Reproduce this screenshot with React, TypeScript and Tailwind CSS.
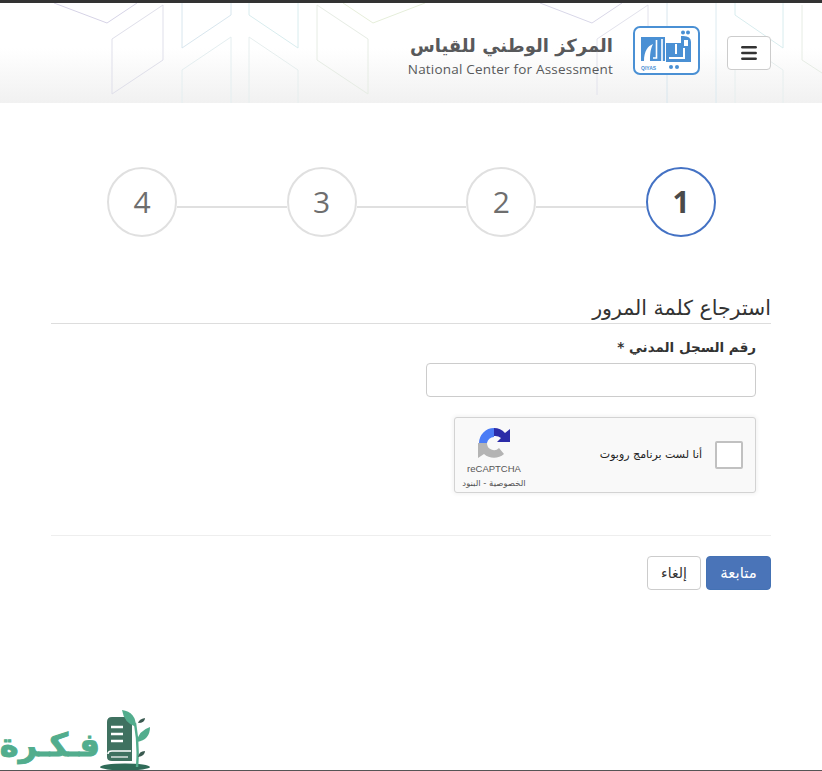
import { Menu } from "lucide-react";

const AR = "font-['DejaVu_Sans',sans-serif]";

const steps = ["2", "3", "4"];

/* faint hexagon lines behind the header */
const headerLines = [
  { p: "54,3 107,23 137,3", c: "#d6d3e6" },
  { p: "112,39 163,5 163,60 112,94 112,39", c: "#dfdfea" },
  { p: "182,3 182,48 231,15 231,3", c: "#d8e6ee" },
  { p: "182,103 182,70 231,37 231,103", c: "#e4eef0" },
  { p: "249,3 249,15 298,48 298,3", c: "#d8ecee" },
  { p: "249,103 249,37 298,70 298,103", c: "#e6eeee" },
  { p: "317,5 317,60 368,94 368,39 317,5", c: "#e6ece4" },
  { p: "343,3 373,23 425,3", c: "#e6eeda" },
  { p: "540,3 592,23 622,3", c: "#d9d7e8" },
  { p: "597,95 597,39 648,5 648,60", c: "#e2e2ec" },
  { p: "667,3 667,103", c: "#d8e6ee" },
  { p: "716,3 716,103", c: "#dceaf0" },
  { p: "735,3 735,15 783,48 783,3", c: "#d8ecee" },
  { p: "735,103 735,37 783,70 783,103", c: "#e6eeee" },
  { p: "802,5 802,60 822,73", c: "#e6ece4" },
];

function HeaderPattern() {
  return (
    <svg className="absolute inset-0 h-full w-full" viewBox="0 0 822 100" preserveAspectRatio="none">
      <g transform="translate(0,-3)">
        {headerLines.map((l) => (
          <polyline key={l.p} points={l.p} fill="none" stroke={l.c} strokeWidth="1" />
        ))}
      </g>
    </svg>
  );
}

function QiyasLogo() {
  return (
    <svg width="67" height="49" viewBox="0 0 67 49">
      <rect x="1" y="1" width="65" height="47" rx="6" fill="#fff" stroke="#4a90d4" strokeWidth="2" />
      {/* left block */}
      <path d="M8 11H32V35H8Z" fill="#4a90d4" />
      <path d="M11 35C11 25 15 20 20 18C17 24 17 30 17 35Z" fill="#fff" />
      <path d="M23.5 14V32H20M29 13V35" fill="none" stroke="#fff" strokeWidth="1.6" />
      {/* right block */}
      <path d="M33 17H48V10Q58 9 58 16V36H33Z" fill="#4a90d4" />
      <path d="M51 14H55V20H51Z" fill="#fff" />
      <path d="M43 18V28M36 32H51V22" fill="none" stroke="#fff" strokeWidth="2" />
      <circle cx="50" cy="6.5" r="2" fill="#4a90d4" />
      <circle cx="55" cy="6.5" r="2" fill="#4a90d4" />
      <circle cx="38" cy="41" r="2" fill="#4a90d4" />
      <circle cx="44" cy="41" r="2" fill="#4a90d4" />
      <text x="8" y="44" direction="ltr" fontSize="5" fontWeight="700" fill="#4a90d4" fontFamily="Liberation Sans" className="[direction:ltr]">QIYAS</text>
    </svg>
  );
}

function RecaptchaIcon() {
  return (
    <svg width="32" height="32" viewBox="0 0 32 32">
      <path d="M1 16A15 15 0 0 1 16 1V10A7 7 0 0 0 9 16Z" fill="#4a7cf6" />
      <path d="M16 1A15 15 0 0 1 27 6L32 2V15H19L23 11A9 9 0 0 0 16 9Z" fill="#2c2ca8" />
      <path d="M1 16H9A7 7 0 0 0 21 21L26 27A15 15 0 0 1 6 27L0 31V16Z" fill="#b4b4b4" />
    </svg>
  );
}

function Watermark() {
  return (
    <div dir="ltr" className="absolute bottom-0 left-0 flex h-[60px] items-end">
      <span dir="rtl" className={`${AR} mb-[2px] w-[100px] text-[32px] leading-[46px] font-bold whitespace-nowrap text-[#52ad8d] [-webkit-text-stroke:1px_#52ad8d]`}>فـكـرة</span>
      <svg width="52" height="60" viewBox="0 0 52 60">
        <ellipse cx="25" cy="57" rx="25" ry="3.5" fill="#2f6b58" />
        <path d="M7 12Q7 7 12 7H32V51H12Q7 51 7 47Z" fill="#3f7160" />
        <path d="M11 17H23M11 24H23M11 31H23" stroke="#fff" strokeWidth="2.4" />
        <path d="M8 44Q8 41 12 41H31" fill="none" stroke="#fff" strokeWidth="1.6" />
        <path d="M11 47H28" stroke="#fff" strokeWidth="1.2" />
        <path d="M37 57Q39 36 35 13" fill="none" stroke="#52ad8d" strokeWidth="2.4" />
        <path d="M36 17Q24 13 22 0Q36 2 36 17Z" fill="#52ad8d" />
        <path d="M37 32Q38 21 50 17Q50 30 37 32Z" fill="#52ad8d" />
        <path d="M38 13Q39 9 45 8Q45 13 38 13ZM38 47Q39 41 45 41Q45 46 38 47Z" fill="#3a5a50" />
      </svg>
    </div>
  );
}

export default function App() {
  return (
    <div dir="rtl" className="relative h-[771px] w-[822px] overflow-hidden border-t-[3px] border-b border-t-[#333333] border-b-[#555555] bg-white text-[#333333]">
      {/* Header */}
      <header className="relative h-[100px] bg-gradient-to-b from-white from-45% to-[#f1f1f1]">
        <HeaderPattern />
        <div className="relative flex items-start justify-start pt-[33px] pr-[51px]">
          <button className="flex h-[34px] w-[44px] items-center justify-center rounded border border-[#cccccc] bg-white">
            <Menu className="h-[20px] w-[20px] text-[#333333]" strokeWidth={3} />
          </button>
          <div className="mt-[-10px] mr-[27px]"><QiyasLogo /></div>
          <div className="mt-[-3px] mr-[20px] flex w-[206px] flex-col items-start">
            <span className={`${AR} text-[18px] leading-[26px] font-bold whitespace-nowrap text-[#58595b]`}>المركز الوطني للقياس</span>
            <span dir="ltr" className="mt-[1px] font-['Open_Sans',sans-serif] text-[13.5px] leading-[18px] tracking-[0.2px] whitespace-nowrap text-[#58595b]">National Center for Assessment</span>
          </div>
        </div>
      </header>

      {/* Stepper */}
      <div className="mt-[64px] flex items-center pr-[106px] pl-[107px]">
        <div className="flex h-[70px] w-[70px] shrink-0 items-center justify-center rounded-full border-2 border-[#4472c4] bg-white pb-[2px] font-['Open_Sans',sans-serif] text-[30px] font-bold text-[#4a4a4a]">
          1
        </div>
        {steps.map((s) => (
          <div key={s} className="flex flex-1 items-center">
            <div className="h-[2px] flex-1 translate-y-[5px] bg-[#e0e0e0]" />
            <div className="flex h-[70px] w-[70px] shrink-0 items-center justify-center rounded-full border-2 border-[#e0e0e0] bg-white pb-[2px] font-['Open_Sans',sans-serif] text-[30px] text-[#6e6e6e]">
              {s}
            </div>
          </div>
        ))}
      </div>

      {/* Form */}
      <main className={`${AR} mt-[57px] px-[51px]`}>
        <h1 className="border-b border-[#dddddd] pb-[1px] text-[20.5px] leading-[28px] font-normal text-[#333333]">استرجاع كلمة المرور</h1>
        <div className="w-[345px] pr-[15px]">
          <label className="mt-[13px] block text-[13.5px] leading-[20px] font-bold">رقم السجل المدني *</label>
          <input type="text" className="mt-[6px] block h-[34px] w-[330px] rounded border border-[#cccccc] bg-white" />
          <div className="mt-[20px] flex h-[76px] w-[302px] items-center justify-between rounded-[3px] border border-[#d3d3d3] bg-[#f9f9f9] pr-[12px] pl-[3px] shadow-[0_0_4px_1px_rgba(0,0,0,0.06)]">
            <div className="flex items-center gap-[13px]">
              <div className="h-[28px] w-[28px] rounded-[2px] border-2 border-[#c1c1c1] bg-white" />
              <span className="text-[11px] text-[#222222]">أنا لست برنامج روبوت</span>
            </div>
            <div className="flex w-[72px] flex-col items-center self-end pb-[3px]">
              <RecaptchaIcon />
              <span className="mt-[4px] font-['Liberation_Sans',sans-serif] text-[9.5px] leading-[12px] text-[#555555]">reCAPTCHA</span>
              <span className="mt-[2px] text-[8.5px] leading-[12px] whitespace-nowrap text-[#555555]">الخصوصية - البنود</span>
            </div>
          </div>
        </div>
        <hr className="mt-[42px] border-[#eeeeee]" />
        <div className="mt-[20px] flex gap-[5px]">
          <button className="h-[34px] w-[65px] rounded border border-[#4472b4] bg-[#4a74b8] text-[15px] text-white">متابعة</button>
          <button className="h-[34px] w-[54px] rounded border border-[#cccccc] bg-white text-[14px] text-[#333333]">إلغاء</button>
        </div>
      </main>

      <Watermark />
    </div>
  );
}
